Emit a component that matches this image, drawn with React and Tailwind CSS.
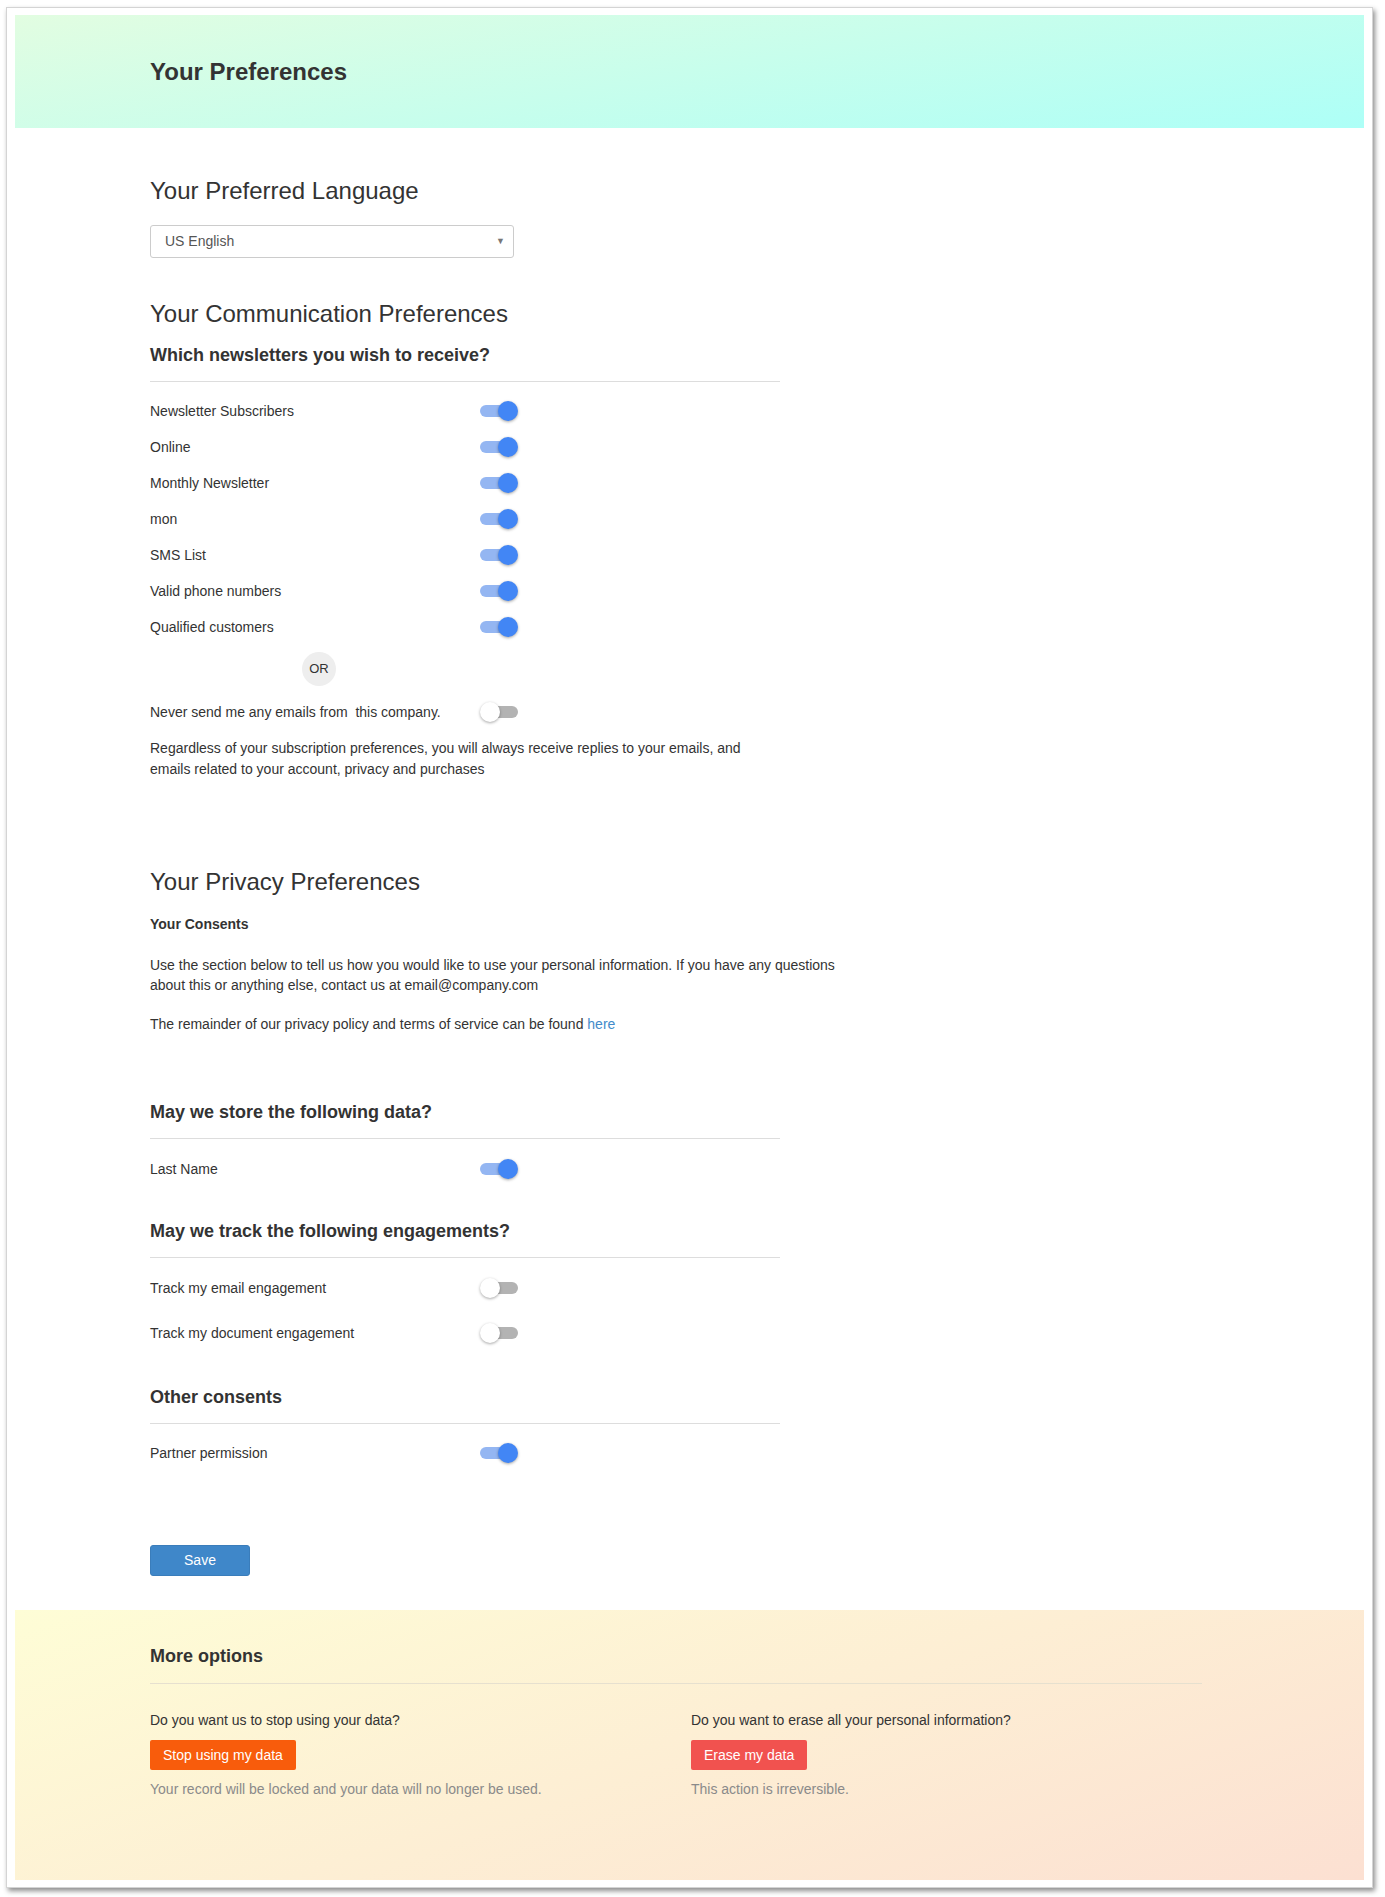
import React, { useState } from "react";

const NEWSLETTERS = [
  "Newsletter Subscribers",
  "Online",
  "Monthly Newsletter",
  "mon",
  "SMS List",
  "Valid phone numbers",
  "Qualified customers",
];

const Toggle = ({ on, onChange }) => (
  <button
    type="button"
    onClick={onChange}
    className="relative w-[38px] h-[20px] shrink-0 cursor-pointer"
  >
    <span
      className={`absolute top-[4px] h-[12px] w-[34px] rounded-full ${
        on ? "left-0 bg-[#94b6f2]" : "left-[4px] bg-[#b3b3b3]"
      }`}
    />
    <span
      className={`absolute top-0 h-[20px] w-[20px] rounded-full shadow-[0_1px_3px_rgba(0,0,0,0.35)] ${
        on ? "right-0 bg-[#4286f5]" : "left-0 bg-white"
      }`}
    />
  </button>
);

const Row = ({ label, on, onChange, className = "" }) => (
  <div className={`flex items-center h-[36px] ${className}`}>
    <span className="w-[330px] text-[14px]">{label}</span>
    <Toggle on={on} onChange={onChange} />
  </div>
);

const SubHead = ({ children, className = "" }) => (
  <>
    <h3 className={`text-[18px] leading-[20px] font-bold ${className}`}>{children}</h3>
    <hr className="mt-[16px] w-[630px] border-0 border-t border-[#dddddd]" />
  </>
);

export default function App() {
  const [news, setNews] = useState(NEWSLETTERS.map(() => true));
  const [never, setNever] = useState(false);
  const [lastName, setLastName] = useState(true);
  const [trackEmail, setTrackEmail] = useState(false);
  const [trackDoc, setTrackDoc] = useState(false);
  const [partner, setPartner] = useState(true);

  return (
    <div className="w-[1385px] h-[1897px] bg-white pt-[7px] pl-[6px] font-['Liberation_Sans',Arial,sans-serif] text-[#333333]">
      <div className="w-[1367px] h-[1881px] bg-white border border-[#d4d4d4] shadow-[2px_3px_5px_rgba(0,0,0,0.45)] px-[8px] pt-[7px] pb-[7px] flex flex-col">
        {/* header */}
        <div className="h-[113px] shrink-0 flex items-center pl-[135px] bg-[linear-gradient(170deg,#e2fde1,#adfff7)]">
          <h1 className="text-[24px] font-bold">Your Preferences</h1>
        </div>

        {/* main */}
        <div className="flex-1 pl-[135px]">
          <h2 className="mt-[50px] text-[24px] leading-[26px]">Your Preferred Language</h2>
          <div className="mt-[21px] w-[364px] h-[33px] border border-[#cccccc] rounded-[3px] flex items-center justify-between pl-[14px] pr-[8px] text-[14px] text-[#555]">
            <span>US English</span>
            <span className="text-[9px] text-[#777]">▼</span>
          </div>

          <h2 className="mt-[43px] text-[24px] leading-[26px]">Your Communication Preferences</h2>
          <SubHead className="mt-[18px]">Which newsletters you wish to receive?</SubHead>
          <div className="mt-[11px]">
            {NEWSLETTERS.map((n, i) => (
              <Row
                key={n}
                label={n}
                on={news[i]}
                onChange={() => setNews((p) => p.map((v, j) => (j === i ? !v : v)))}
              />
            ))}
          </div>
          <div className="mt-[7px] ml-[152px] w-[34px] h-[34px] rounded-full bg-[#eeeeee] flex items-center justify-center text-[13px]">
            OR
          </div>
          <Row
            className="mt-[8px]"
            label={"Never send me any emails from \u00a0this company."}
            on={never}
            onChange={() => setNever(!never)}
          />
          <p className="mt-[8px] w-[630px] text-[14px] leading-[21px]">
            Regardless of your subscription preferences, you will always receive replies to your emails, and
            emails related to your account, privacy and purchases
          </p>

          <h2 className="mt-[89px] text-[24px] leading-[26px]">Your Privacy Preferences</h2>
          <h4 className="mt-[19px] text-[14px] leading-[20px] font-bold">Your Consents</h4>
          <p className="mt-[21px] w-[700px] text-[14px] leading-[20px]">
            Use the section below to tell us how you would like to use your personal information. If you have any questions
            about this or anything else, contact us at email@company.com
          </p>
          <p className="mt-[19px] text-[14px] leading-[20px]">
            The remainder of our privacy policy and terms of service can be found{" "}
            <a href="#" className="text-[#428bca]">here</a>
          </p>

          <SubHead className="mt-[68px]">May we store the following data?</SubHead>
          <Row className="mt-[12px]" label="Last Name" on={lastName} onChange={() => setLastName(!lastName)} />

          <SubHead className="mt-[34px]">May we track the following engagements?</SubHead>
          <Row className="mt-[12px]" label="Track my email engagement" on={trackEmail} onChange={() => setTrackEmail(!trackEmail)} />
          <Row className="mt-[9px]" label="Track my document engagement" on={trackDoc} onChange={() => setTrackDoc(!trackDoc)} />

          <SubHead className="mt-[36px]">Other consents</SubHead>
          <Row className="mt-[11px]" label="Partner permission" on={partner} onChange={() => setPartner(!partner)} />

          <button className="mt-[74px] w-[100px] h-[31px] rounded-[3px] bg-[#3f87c9] border border-[#3a7dbb] text-white text-[14px]">
            Save
          </button>
        </div>

        {/* more options */}
        <div className="h-[270px] shrink-0 pl-[135px] pt-[36px] bg-[linear-gradient(160deg,#fefdd6,#fce0d2)]">
          <h3 className="text-[18px] leading-[20px] font-bold">More options</h3>
          <hr className="mt-[17px] w-[1052px] border-0 border-t border-[#e6e0cf]" />
          <div className="mt-[27px] flex">
            <div className="w-[541px]">
              <p className="text-[14px] leading-[18px]">Do you want us to stop using your data?</p>
              <button className="mt-[11px] h-[30px] px-[13px] rounded-[2px] bg-[#f85c0c] text-white text-[14px]">
                Stop using my data
              </button>
              <p className="mt-[10px] text-[14px] leading-[18px] text-[#8a8a8a]">
                Your record will be locked and your data will no longer be used.
              </p>
            </div>
            <div>
              <p className="text-[14px] leading-[18px]">Do you want to erase all your personal information?</p>
              <button className="mt-[11px] h-[30px] px-[13px] rounded-[2px] bg-[#f1524f] text-white text-[14px]">
                Erase my data
              </button>
              <p className="mt-[10px] text-[14px] leading-[18px] text-[#8a8a8a]">This action is irreversible.</p>
            </div>
          </div>
        </div>
      </div>
    </div>
  );
}
